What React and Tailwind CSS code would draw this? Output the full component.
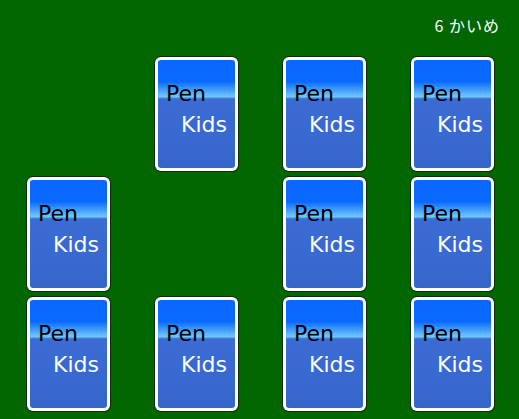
import React from "react";

// layout of the board: false = card already taken
const board = [
  [false, true, true, true],
  [true, false, true, true],
  [true, true, true, true],
];

const Card = ({ show }) => {
  if (!show) return <div className="w-[83px] h-[114px]" />;
  return (
    <div className="w-[83px] h-[114px] rounded-[6px] bg-white p-[3px] shadow-[0_0_0_1px_#0b2e0b]">
      <div className="h-full rounded-[3px] bg-[linear-gradient(to_bottom,#0a66ff_0%,#0a6aff_20%,#70c8ff_34%,#3a6cd4_36%,#3566cc_100%)] pt-[18px] font-['DejaVu_Sans',sans-serif] text-[22px] leading-[31px]">
        <div className="pl-[8px] text-black">Pen</div>
        <div className="pr-[8px] text-right text-white">Kids</div>
      </div>
    </div>
  );
};

export default function App() {
  return (
    <div className="w-[519px] h-[419px] bg-[#006600] overflow-hidden">
      {/* turn counter */}
      <div className="h-[57px] flex justify-end pt-[16px] pr-[19px]">
        <span className="text-white text-[16px] leading-[18px] tracking-[1px] font-['Noto_Sans_CJK_JP',sans-serif]">
          6 かいめ
        </span>
      </div>

      {/* cards */}
      <div className="grid grid-cols-[repeat(4,83px)] gap-x-[45px] gap-y-[6px] pl-[27px]">
        {board.map((row, r) =>
          row.map((show, c) => <Card key={`${r}-${c}`} show={show} />)
        )}
      </div>
    </div>
  );
}
